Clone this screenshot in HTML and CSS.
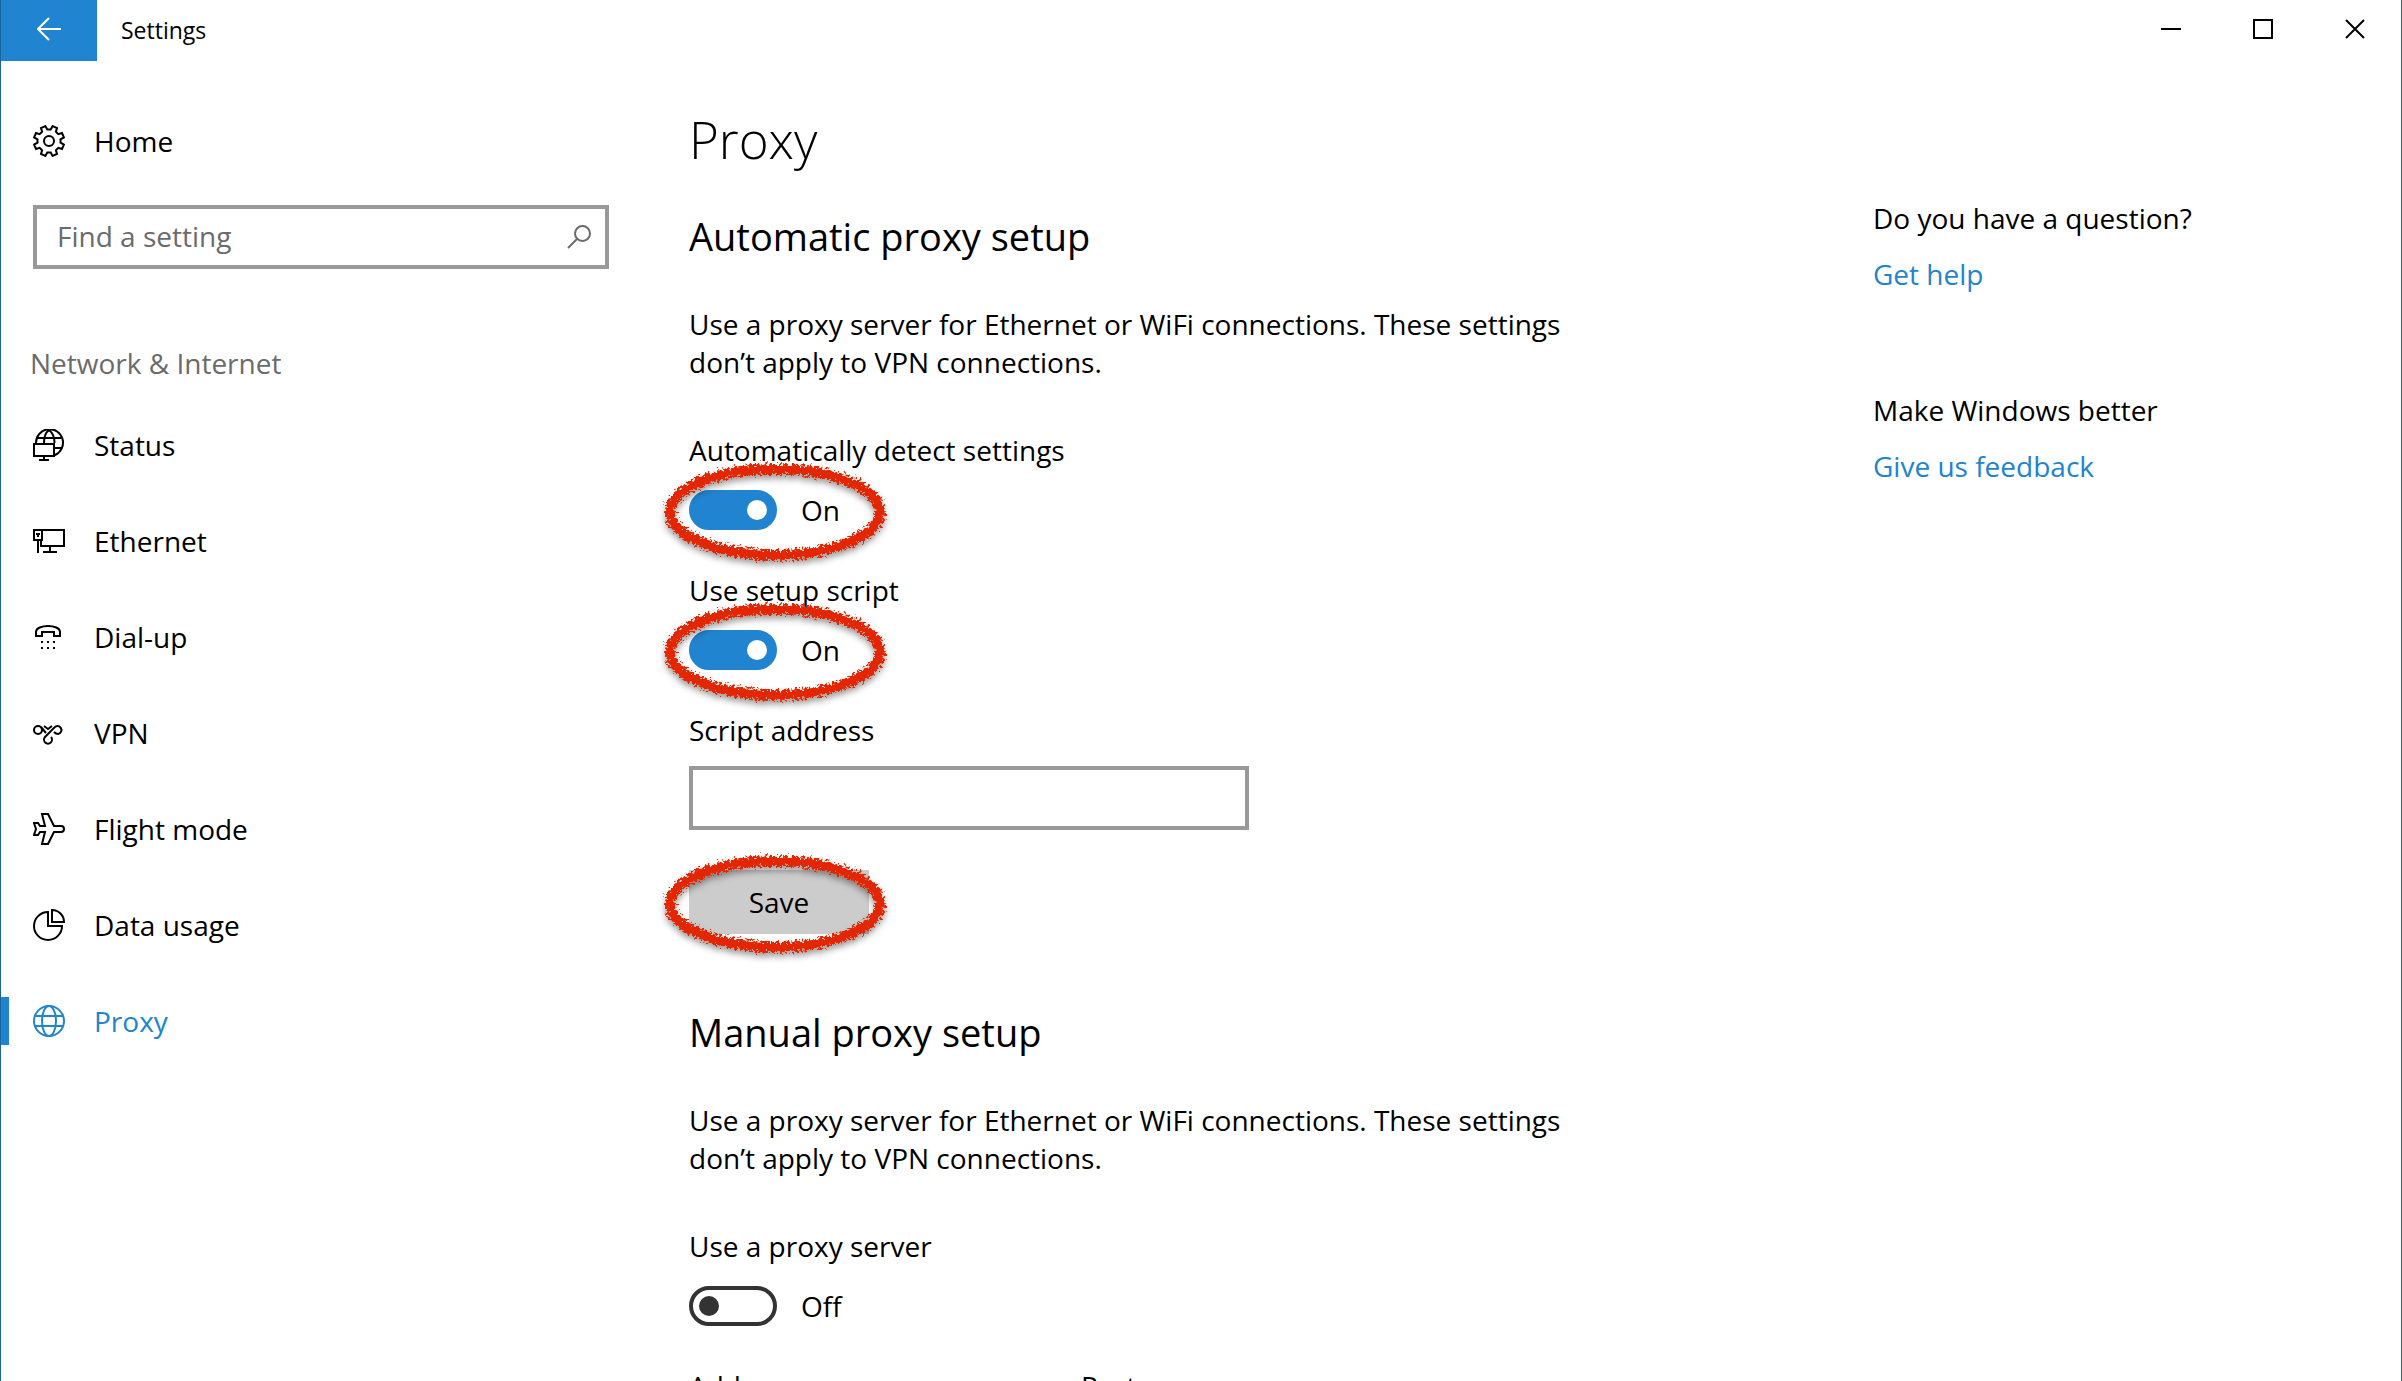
FILE: index.html
```html
<!DOCTYPE html>
<html lang="en">
<head>
<meta charset="utf-8">
<meta name="viewport" content="width=device-width, initial-scale=1">
<title>Settings</title>
<link rel="stylesheet" href="styles.css">
</head>
<body>
<svg class="defs" width="0" height="0" aria-hidden="true">
  <defs>
    <filter id="crayon" x="-10%" y="-20%" width="120%" height="150%">
      <feTurbulence type="fractalNoise" baseFrequency="0.4" numOctaves="3" seed="4" result="noise"/>
      <feDisplacementMap in="SourceGraphic" in2="noise" scale="12" xChannelSelector="R" yChannelSelector="G" result="rough"/>
      <feDropShadow in="rough" dx="0" dy="4" stdDeviation="3" flood-color="#000" flood-opacity="0.4"/>
    </filter>
    <symbol id="ring" viewBox="0 0 240 120">
      <g filter="url(#crayon)">
        <ellipse cx="120" cy="58" rx="105" ry="43" fill="none" stroke="#e42700" stroke-width="10"/>
      </g>
    </symbol>
  </defs>
</svg>
<div class="window">
  <header class="titlebar">
    <button class="back" type="button" aria-label="Back">
      <svg class="icon-small" viewBox="0 0 24 24"><path d="M12 1 1 12 12 23M1 12H24"/></svg>
    </button>
    <span class="app-name">Settings</span>
    <div class="window-buttons">
      <button type="button" aria-label="Minimize"><svg class="icon-window" viewBox="0 0 20 20"><path d="M0 10H20"/></svg></button>
      <button type="button" aria-label="Maximize"><svg class="icon-window" viewBox="0 0 20 20"><path d="M1 1H19V19H1Z"/></svg></button>
      <button type="button" aria-label="Close"><svg class="icon-window" viewBox="0 0 20 20"><path d="M1 1 19 19M19 1 1 19"/></svg></button>
    </div>
  </header>

  <div class="body">
    <aside class="sidebar">
      <a class="home" href="#home">
        <svg class="icon" viewBox="0 0 32 32"><circle cx="16" cy="16" r="5"/><path d="M27.500 17.700 30.900 19.600 29 24 25.300 22.900 22.900 25.300 24 29 19.600 30.900 17.700 27.500 14.300 27.500 12.400 30.900 8 29 9.100 25.300 6.700 22.900 3 24 1.100 19.600 4.500 17.700 4.500 14.300 1.100 12.400 3 8 6.700 9.100 9.100 6.700 8 3 12.400 1.100 14.300 4.500 17.700 4.500 19.600 1.100 24 3 22.900 6.700 25.300 9.100 29 8 30.900 12.400 27.500 14.300Z"/></svg>
        Home
      </a>
      <form class="search" role="search">
        <input type="search" placeholder="Find a setting" aria-label="Find a setting">
        <svg class="icon-small" viewBox="0 0 24 24"><circle cx="15.500" cy="8.500" r="7.500"/><path d="M10 14 1 23"/></svg>
      </form>
      <h2 class="group">Network &amp; Internet</h2>
      <nav class="nav">
        <a href="#status">
          <svg class="icon" viewBox="0 0 32 32"><path d="M3 14A13.500 13.500 0 1 1 22 26M16 1C12 4 11 9 11 14M16 1C20 4 21.500 9 21.500 14M4 9H28M22 19H29M1 15H21V27H1ZM11 27V31M6 31H16"/></svg>
          Status
        </a>
        <a href="#ethernet">
          <svg class="icon" viewBox="0 0 32 32"><path d="M9 5H31V21H8V16M1 5H9V15H1ZM3 9H7M5 9V12M5 15V28M17 21V27M10 27H24"/></svg>
          Ethernet
        </a>
        <a href="#dialup">
          <svg class="icon" viewBox="0 0 32 32"><path d="M3 15V11C3 7 9 5 15 5S27 7 27 11V15H21V11H9V15ZM8 21H10M14 21H16M20 21H22M8 27H10M14 27H16M20 27H22"/></svg>
          Dial-up
        </a>
        <a href="#vpn">
          <svg class="icon" viewBox="0 0 32 32"><circle cx="5" cy="13" r="4"/><path d="M8 10 13 16M11 9 15 12 19 9M12 20A4 4 0 1 0 18 20M12 20 21 11A4 4 0 1 1 25 17C23 17 22 16 21 15"/></svg>
          VPN
        </a>
        <a href="#flight">
          <svg class="icon" viewBox="0 0 32 32"><path d="M9 1H15L21 13H28C32 13 32 19 28 19H21L15 31H9L12 19H7L5 22H1L3 16 1 10H5L7 13H12Z"/></svg>
          Flight mode
        </a>
        <a href="#data">
          <svg class="icon" viewBox="0 0 32 32"><path d="M15 3A14 14 0 1 0 29 17H15ZM19 1V13H31A12 12 0 0 0 19 1Z"/></svg>
          Data usage
        </a>
        <a class="current" href="#proxy" aria-current="page">
          <svg class="icon" viewBox="0 0 32 32"><circle cx="16" cy="16" r="15"/><ellipse cx="16" cy="16" rx="7" ry="15"/><path d="M2 11H30M2 21H30"/></svg>
          Proxy
        </a>
      </nav>
    </aside>

    <main class="content">
      <h1>Proxy</h1>
      <section>
        <h2>Automatic proxy setup</h2>
        <p>Use a proxy server for Ethernet or WiFi connections. These settings don’t apply to VPN connections.</p>
        <div class="setting">
          <label for="detect">Automatically detect settings</label>
          <div class="switch marked">
            <input type="checkbox" role="switch" id="detect" checked>
            <span>On</span>
            <svg class="ring" aria-hidden="true"><use href="#ring"/></svg>
          </div>
        </div>
        <div class="setting">
          <label for="script">Use setup script</label>
          <div class="switch marked">
            <input type="checkbox" role="switch" id="script" checked>
            <span>On</span>
            <svg class="ring" aria-hidden="true"><use href="#ring"/></svg>
          </div>
        </div>
        <div class="setting field">
          <label for="address">Script address</label>
          <input type="text" id="address">
        </div>
        <div class="marked">
          <button class="save" type="button">Save</button>
          <svg class="ring" aria-hidden="true"><use href="#ring"/></svg>
        </div>
      </section>
      <section>
        <h2>Manual proxy setup</h2>
        <p>Use a proxy server for Ethernet or WiFi connections. These settings don’t apply to VPN connections.</p>
        <div class="setting">
          <label for="manual">Use a proxy server</label>
          <div class="switch">
            <input type="checkbox" role="switch" id="manual">
            <span>Off</span>
          </div>
        </div>
        <div class="server">
          <div class="field">
            <label for="server-address">Address</label>
            <input type="text" id="server-address">
          </div>
          <div class="field">
            <label for="server-port">Port</label>
            <input type="text" id="server-port">
          </div>
        </div>
      </section>
    </main>

    <aside class="help">
      <div>
        <p>Do you have a question?</p>
        <a href="#help">Get help</a>
      </div>
      <div>
        <p>Make Windows better</p>
        <a href="#feedback">Give us feedback</a>
      </div>
    </aside>
  </div>
</div>
</body>
</html>
```
FILE: styles.css
```css
:root {
  --accent: #2184d0;
  --grey: #999;
}

* {
  box-sizing: border-box;
}

body {
  margin: 0;
  background: #fff;
  color: #000;
  font: 28px/38px "Open Sans", "Noto Sans", sans-serif;
}

h1,
h2,
p {
  margin: 0;
  font-weight: 400;
}

a {
  color: inherit;
  text-decoration: none;
}

button,
input {
  margin: 0;
  border: 0;
  border-radius: 0;
  font: inherit;
  color: inherit;
}

svg {
  fill: none;
  stroke: currentColor;
  stroke-width: 2;
}

.defs {
  position: absolute;
}

.icon {
  width: 32px;
  height: 32px;
  flex: none;
}

.icon-small {
  width: 24px;
  height: 24px;
}

.icon-window {
  width: 20px;
  height: 20px;
}

.window {
  display: flex;
  flex-direction: column;
  height: 100vh;
  overflow: hidden;
  border: solid #1b639b;
  border-width: 0 1px;
}

.titlebar {
  display: flex;
  align-items: stretch;
  flex: none;
  height: 61px;
}

.titlebar button {
  display: flex;
  align-items: center;
  justify-content: center;
  padding: 0 0 3px;
  background: none;
}

.titlebar .back {
  width: 96px;
  background: var(--accent);
  color: #fff;
}

.app-name {
  flex: 1;
  padding-left: 24px;
  font-size: 23px;
  line-height: 61px;
}

.window-buttons {
  display: flex;
}

.window-buttons button {
  width: 92px;
}

.body {
  display: grid;
  grid-template-columns: 608px minmax(0, 1fr) 528px;
  flex: 1;
  min-height: 0;
}

.sidebar {
  padding-top: 61px;
}

.home,
.nav a {
  display: flex;
  align-items: center;
  gap: 29px;
  padding-left: 32px;
}

.search {
  position: relative;
  margin: 45px 0 75px 32px;
}

.search input {
  display: block;
  width: 100%;
  height: 64px;
  padding: 0 56px 2px 20px;
  border: 4px solid var(--grey);
  appearance: none;
}

.search input::placeholder {
  color: #6b6b6b;
  opacity: 1;
}

.search svg {
  position: absolute;
  top: 20px;
  right: 18px;
  color: #6b6b6b;
}

.group {
  padding-left: 29px;
  margin-bottom: 15px;
  font-size: 28px;
  color: #6b6b6b;
}

.nav a {
  height: 96px;
}

.nav .current {
  color: var(--accent);
  background: linear-gradient(var(--accent), var(--accent)) left / 8px 48px no-repeat;
}

.content {
  padding: 40px 0 0 80px;
  min-height: 0;
}

h1 {
  font-size: 51px;
  line-height: 76px;
  font-weight: 300;
  margin-bottom: 33px;
}

.content h2 {
  font-size: 38px;
  line-height: 52px;
  margin-bottom: 43px;
}

.content section {
  margin-bottom: 72px;
}

.content p {
  max-width: 900px;
  margin-bottom: 50px;
}

.setting {
  display: flex;
  flex-direction: column;
  align-items: flex-start;
  gap: 21px;
  margin-bottom: 41px;
}

.switch {
  display: flex;
  align-items: center;
  gap: 24px;
  height: 40px;
}

.switch input {
  display: flex;
  align-items: center;
  width: 88px;
  height: 40px;
  padding: 0 6px;
  border: 4px solid #333;
  border-radius: 20px;
  appearance: none;
}

.switch input::before {
  content: "";
  width: 20px;
  height: 20px;
  border-radius: 50%;
  background: #333;
}

.switch input:checked {
  justify-content: flex-end;
  border-color: var(--accent);
  background: var(--accent);
}

.switch input:checked::before {
  background: #fff;
}

.marked {
  position: relative;
  width: fit-content;
}

.ring {
  position: absolute;
  top: calc(50% - 56px);
  left: -34px;
  width: 240px;
  height: 120px;
  pointer-events: none;
}

.field {
  display: flex;
  flex-direction: column;
  gap: 17px;
}

.field input {
  width: 560px;
  height: 64px;
  padding: 0 20px;
  border: 4px solid var(--grey);
}

.field.setting {
  margin-bottom: 40px;
}

.save {
  display: block;
  width: 180px;
  height: 64px;
  background: #ccc;
}

.server {
  display: flex;
  gap: 32px;
}

.server .field input {
  width: 360px;
}

.help {
  display: flex;
  flex-direction: column;
  gap: 98px;
  padding-top: 138px;
}

.help p {
  margin-bottom: 18px;
}

.help a {
  display: block;
  color: var(--accent);
}
```
